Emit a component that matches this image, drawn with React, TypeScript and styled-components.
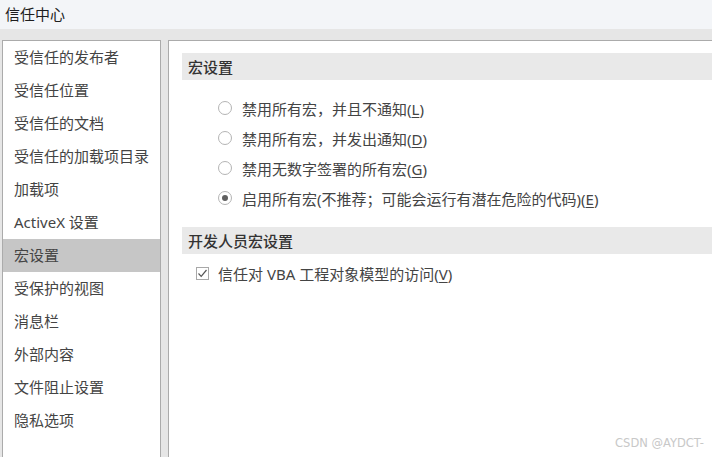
import styled, { createGlobalStyle } from "styled-components";

const GlobalStyle = createGlobalStyle`
  html, body {
    margin: 0;
    padding: 0;
    background: #e6e6e6;
    overflow: hidden;
  }
  body {
    font-family: "Noto Sans", "Noto Sans CJK SC", sans-serif;
  }
`;

const Window = styled.div`
  width: 712px;
  height: 457px;
  display: flex;
  flex-direction: column;
  background: #e6e6e6;
  overflow: hidden;
  position: relative;
`;

const TitleBar = styled.div`
  height: 29px;
  flex-shrink: 0;
  background: #f3f5f8;
  display: flex;
  align-items: center;
  padding: 0 0 2px 5px;
  box-sizing: border-box;
  font-family: "Noto Sans CJK SC", sans-serif;
  font-size: 15px;
  color: #1e1e1e;
`;

const Body = styled.div`
  flex: 1;
  display: flex;
  gap: 7px;
  padding: 11px 0 0 2px;
  min-height: 0;
`;

const Nav = styled.ul`
  list-style: none;
  margin: 0;
  padding: 0;
  width: 157px;
  flex-shrink: 0;
  background: #fff;
  border: 1px solid #ababab;
  border-bottom: none;
`;

const NavItem = styled.li<{ $active?: boolean }>`
  height: 33px;
  box-sizing: border-box;
  display: flex;
  align-items: center;
  padding: 0 0 2px 11px;
  font-family: "Noto Sans", "Noto Sans CJK SC", sans-serif;
  font-size: 15px;
  color: #444;
  background: ${(p) => (p.$active ? "#c6c6c6" : "transparent")};
`;

const Content = styled.div`
  flex: 1;
  background: #fff;
  border-top: 1px solid #ababab;
  border-left: 1px solid #ababab;
  padding: 12px 0 0 13px;
`;

const SectionHeader = styled.div`
  height: 27px;
  box-sizing: border-box;
  display: flex;
  align-items: center;
  padding: 0 0 1px 6px;
  background: #e9e9e9;
  font-family: "Noto Sans CJK SC", sans-serif;
  font-size: 15px;
  font-weight: 500;
  color: #333;
`;

const OptionList = styled.div`
  display: flex;
  flex-direction: column;
  padding: 13px 0 14px 36px;
`;

const OptionRow = styled.label`
  height: 30px;
  box-sizing: border-box;
  display: flex;
  align-items: center;
  gap: 10px;
  font-family: "Noto Sans", "Noto Sans CJK SC", sans-serif;
  font-size: 15px;
  color: #444;
`;

const Radio = styled.span<{ $checked?: boolean }>`
  width: 14px;
  height: 14px;
  flex-shrink: 0;
  box-sizing: border-box;
  border-radius: 50%;
  border: 1px solid #b4b4b4;
  background: #fff;
  display: flex;
  align-items: center;
  justify-content: center;
  &::after {
    content: "";
    width: 6px;
    height: 6px;
    border-radius: 50%;
    background: ${(p) => (p.$checked ? "#5f5f5f" : "transparent")};
  }
`;

const CheckRow = styled(OptionRow)`
  gap: 9px;
  padding: 8px 0 0 14px;
`;

const CheckBox = styled.span`
  width: 13px;
  height: 13px;
  flex-shrink: 0;
  box-sizing: border-box;
  border: 1px solid #a8a8a8;
  background: #fff;
  display: flex;
  align-items: center;
  justify-content: center;
`;

const Key = styled.span`
  text-decoration: underline;
  text-underline-offset: 2px;
`;

const Watermark = styled.div`
  position: absolute;
  right: 8px;
  bottom: 7px;
  font-family: "DejaVu Sans", sans-serif;
  font-size: 11.5px;
  color: #c8c8c8;
`;

const navItems = [
  "受信任的发布者",
  "受信任位置",
  "受信任的文档",
  "受信任的加载项目录",
  "加载项",
  "ActiveX 设置",
  "宏设置",
  "受保护的视图",
  "消息栏",
  "外部内容",
  "文件阻止设置",
  "隐私选项",
];

const macroOptions = [
  { text: "禁用所有宏，并且不通知", key: "L" },
  { text: "禁用所有宏，并发出通知", key: "D" },
  { text: "禁用无数字签署的所有宏", key: "G" },
  { text: "启用所有宏(不推荐；可能会运行有潜在危险的代码)", key: "E", checked: true },
];

export default function App() {
  return (
    <>
      <GlobalStyle />
      <Window>
        <TitleBar>信任中心</TitleBar>
        <Body>
          <Nav>
            {navItems.map((n) => (
              <NavItem key={n} $active={n === "宏设置"}>
                {n}
              </NavItem>
            ))}
          </Nav>
          <Content>
            <SectionHeader>宏设置</SectionHeader>
            <OptionList>
              {macroOptions.map((o) => (
                <OptionRow key={o.key}>
                  <Radio $checked={o.checked} />
                  <span>
                    {o.text}(<Key>{o.key}</Key>)
                  </span>
                </OptionRow>
              ))}
            </OptionList>
            <SectionHeader>开发人员宏设置</SectionHeader>
            <CheckRow>
              <CheckBox>
                <svg width="11" height="11" viewBox="0 0 11 11">
                  <path d="M1.5 5.5 L4.2 8.3 L9.5 2" fill="none" stroke="#555" strokeWidth="1.2" />
                </svg>
              </CheckBox>
              <span>
                信任对 VBA 工程对象模型的访问(<Key>V</Key>)
              </span>
            </CheckRow>
          </Content>
        </Body>
        <Watermark>CSDN @AYDCT-</Watermark>
      </Window>
    </>
  );
}
